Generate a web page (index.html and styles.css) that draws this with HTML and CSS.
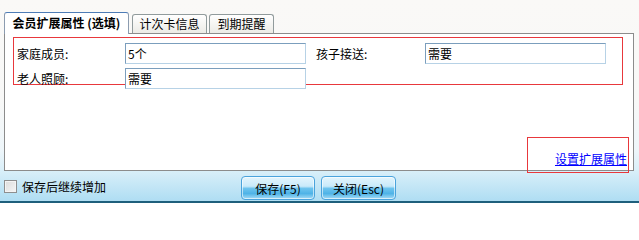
FILE: index.html
```html
<!DOCTYPE html>
<html lang="zh-CN">
<head>
<meta charset="utf-8">
<title>会员扩展属性</title>
<link rel="stylesheet" href="styles.css">
</head>
<body>
<div class="window">
  <div class="tabs">
    <div class="tab active">会员扩展属性 (选填)</div>
    <div class="tab t2">计次卡信息</div>
    <div class="tab t3">到期提醒</div>
  </div>
  <div class="panel">
    <div class="fields">
      <span class="lbl">家庭成员:</span>
      <input class="inp" type="text" value="5个" readonly>
      <span class="lbl r">孩子接送:</span>
      <input class="inp" type="text" value="需要" readonly>
      <span class="lbl">老人照顾:</span>
      <input class="inp" type="text" value="需要" readonly>
    </div>
    <div class="panel-foot">
      <div class="link-box"><a class="link" href="#">设置扩展属性</a></div>
    </div>
  </div>
  <div class="bar">
    <label class="keep"><span class="chk"></span><span>保存后继续增加</span></label>
    <div class="btns">
      <button class="btn save" type="button">保存(F5)</button>
      <button class="btn close" type="button">关闭(Esc)</button>
    </div>
    <div></div>
  </div>
</div>
</body>
</html>
```

FILE: styles.css
```css
* { box-sizing: border-box; }
html, body { margin: 0; padding: 0; }
body {
  width: 639px;
  height: 203px;
  overflow: hidden;
  font-family: "Noto Sans CJK SC", "Noto Sans", sans-serif;
  font-size: 12px;
  color: #000;
}
.window {
  width: 639px;
  height: 203px;
  display: flex;
  flex-direction: column;
  background: linear-gradient(#faf9f7 0px, #f8f8f7 100px, #eef6fa 150px, #d9eff9 171px, #b0def3 200px);
  border-bottom: 2px solid #1e5f7c;
}
.tabs {
  height: 33px;
  flex: none;
  display: flex;
  align-items: flex-end;
  padding-left: 4px;
  gap: 2px;
}
.tab {
  height: 19px;
  display: flex;
  align-items: center;
  justify-content: center;
  border: 1px solid #919b9c;
  border-bottom: none;
  border-radius: 3px 3px 0 0;
  background: linear-gradient(#ffffff, #ecebe6);
  white-space: nowrap;
  line-height: 1;
}
.tab.active {
  width: 125px;
  height: 22px;
  margin-bottom: -1px;
  position: relative;
  z-index: 1;
  background: #fff;
  font-weight: bold;
  border-color: #8c9cb0;
  border-top-color: #4d7cb6;
  padding-bottom: 1px;
}
.tab.t2 { width: 75px; margin-left: 1px; }
.tab.t3 { width: 65px; }
.panel {
  height: 138px;
  flex: none;
  margin: 0 5px 0 4px;
  border: 1px solid #8c8c8c;
  background: #fff;
  display: flex;
  flex-direction: column;
}
.fields {
  width: 610px;
  height: 48px;
  margin: 3px 0 0 8px;
  border: 1px solid #e8383c;
  padding: 5px 0 0 3px;
  display: grid;
  grid-template-columns: 108px 181px 119px 181px;
  grid-auto-rows: 21px;
  row-gap: 4px;
  align-items: center;
}
.lbl { white-space: nowrap; }
.lbl.r { padding-left: 10px; }
.inp {
  width: 181px;
  height: 21px;
  margin: 0;
  padding: 0 2px;
  font: inherit;
  color: #000;
  background: #fff;
  border: 1px solid;
  border-color: #7b9ebd #b7d2e6 #b7d2e6 #7b9ebd;
  outline: none;
}
.panel-foot {
  margin-top: auto;
  margin-bottom: -3px;
  display: flex;
  justify-content: flex-end;
  padding-right: 4px;
}
.link-box {
  width: 102px;
  height: 36px;
  border: 1px solid #e8383c;
  display: flex;
  align-items: flex-end;
  justify-content: flex-end;
  padding: 0 1px 6px 0;
}
.link {
  color: #0000ff;
  text-decoration: underline;
  line-height: 14px;
}
.bar {
  flex: 1;
  display: grid;
  grid-template-columns: 1fr auto 1fr;
  align-items: start;
  padding-top: 5px;
}
.keep {
  display: flex;
  align-items: center;
  gap: 5px;
  margin: 2px 0 0 4px;
  white-space: nowrap;
}
.chk {
  width: 13px;
  height: 13px;
  border: 1px solid #8e8f8f;
  background: linear-gradient(135deg, #dcdcdc, #f6f6f6);
  box-shadow: inset 0 0 0 1px #f4f4f4;
}
.btns {
  display: flex;
  gap: 6px;
  margin-right: 2px;
}
.btn {
  height: 24px;
  padding: 0;
  font: inherit;
  color: #000;
  border: 1px solid #4aa3dc;
  border-radius: 4px;
  background: linear-gradient(#e4f5fd 0%, #c9eafa 42%, #6ec4ee 52%, #4fb3e7 75%, #a6dcf6 100%);
  box-shadow: inset 0 0 0 1px rgba(255,255,255,0.6);
}
.btn.save { width: 74px; }
.btn.close { width: 75px; }
```
